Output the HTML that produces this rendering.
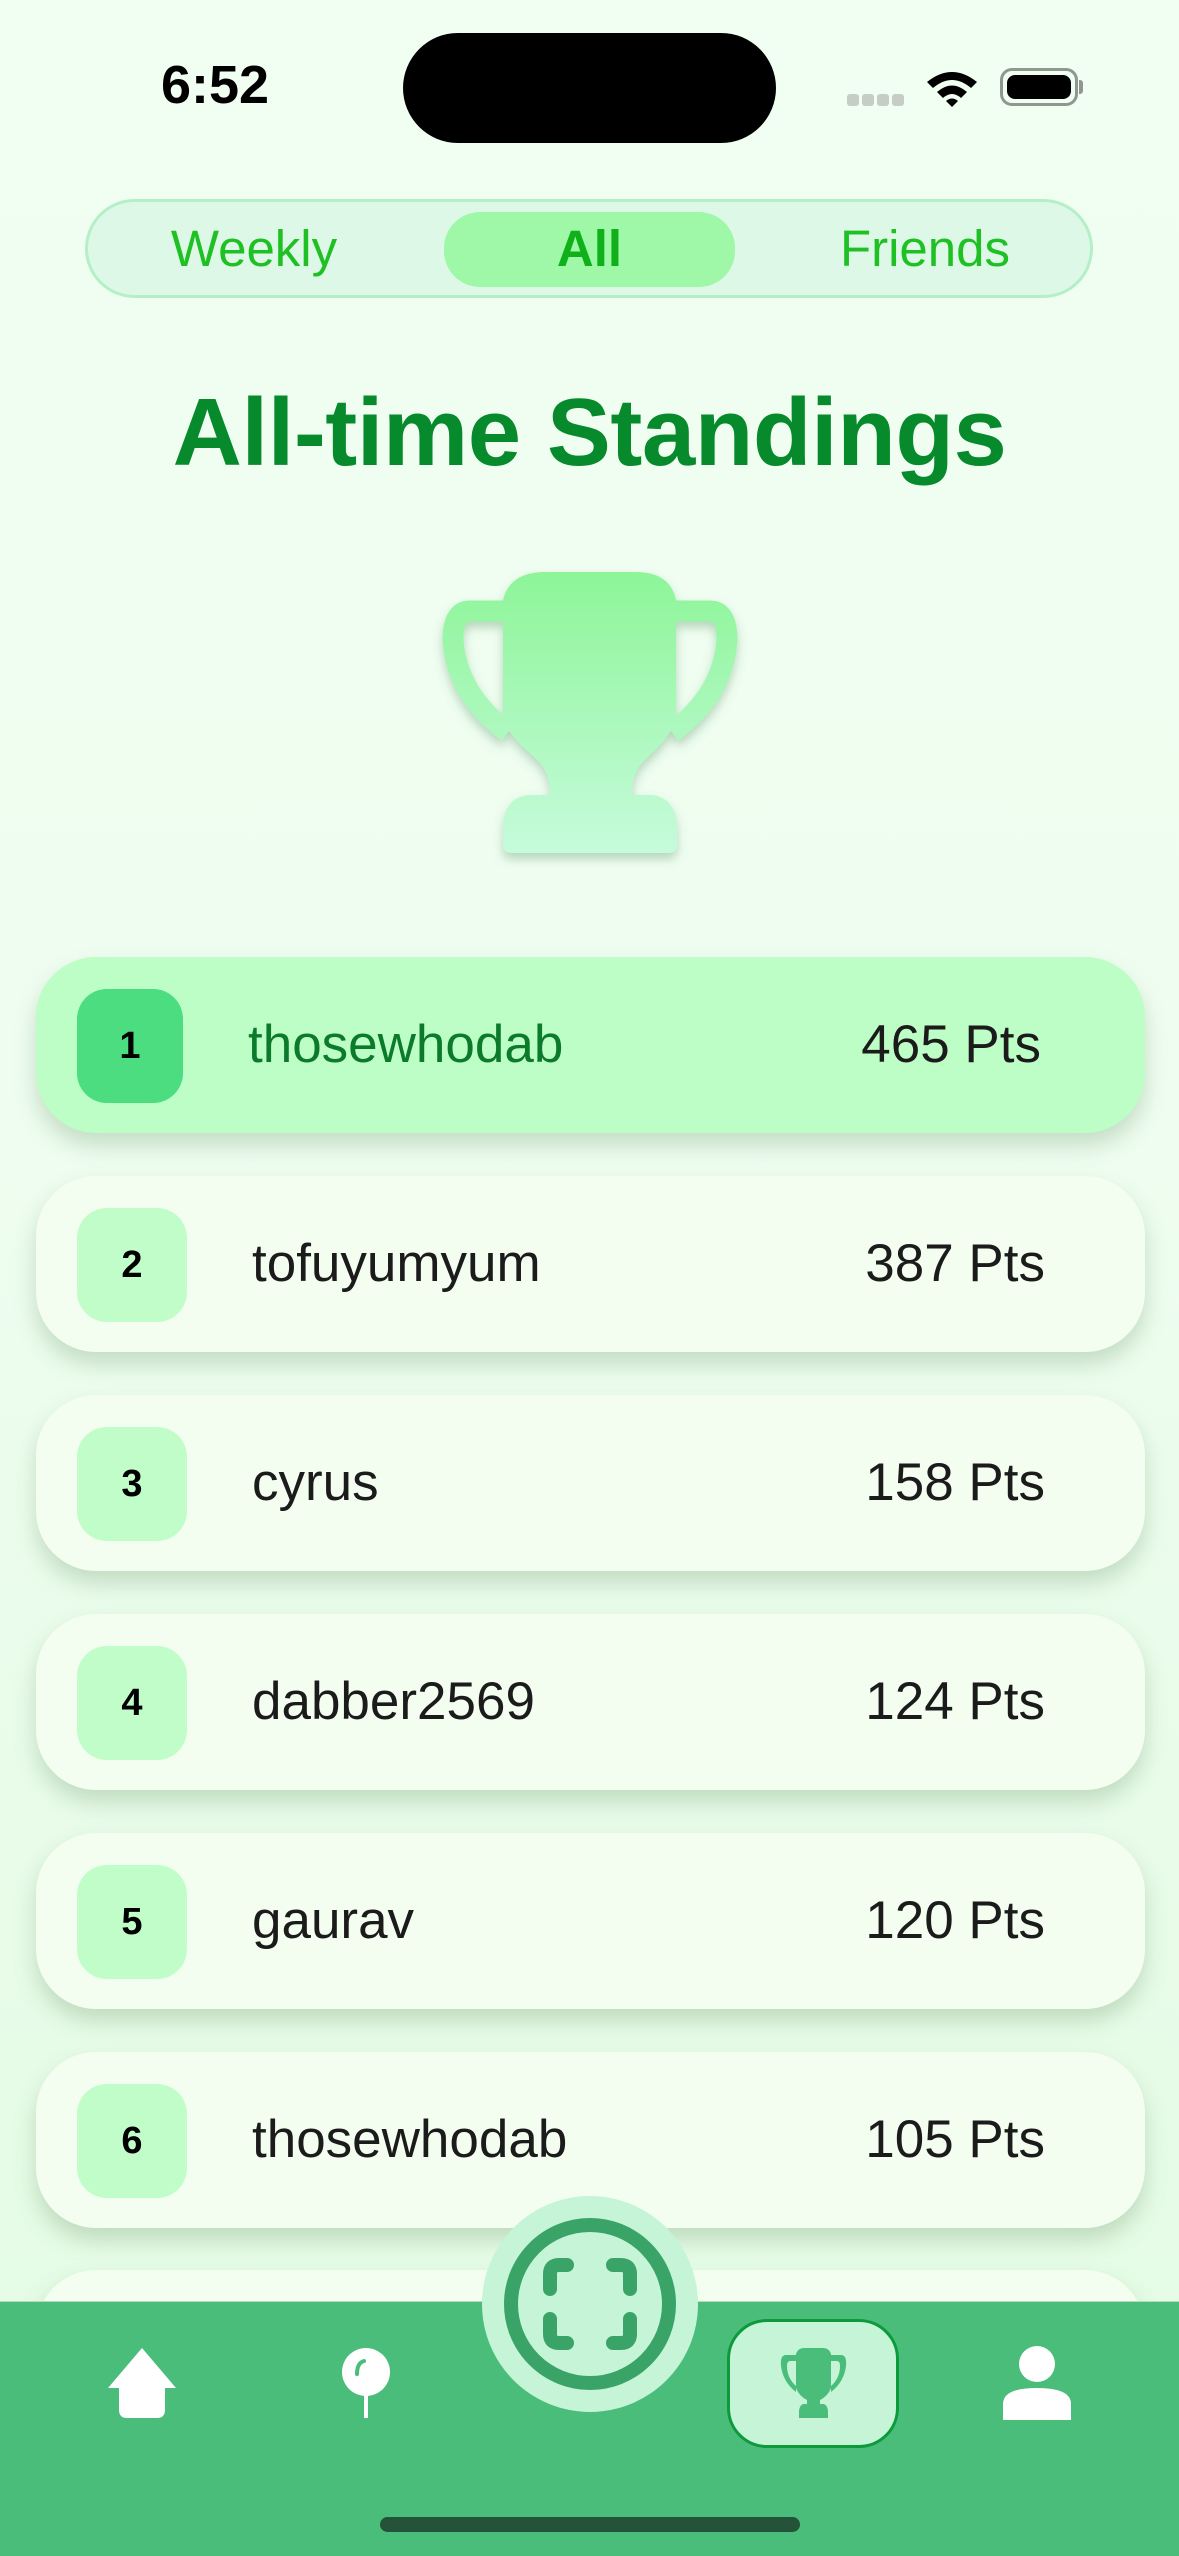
<!DOCTYPE html>
<html><head><meta charset="utf-8"><style>
*{margin:0;padding:0;box-sizing:border-box}
body{width:1179px;height:2556px;overflow:hidden;position:relative;font-family:"Liberation Sans",sans-serif;background:linear-gradient(#f1fff2 0%,#effdf0 40%,#e3fbe3 100%)}
.abs{position:absolute}
.seg{left:85px;top:199px;width:1008px;height:99px;border-radius:50px;background:#def8e7;border:3px solid #b5efc7}
.segt{position:absolute;top:0;height:93px;line-height:93px;font-size:51px;color:#1fc024;text-align:center}
.pill{left:444px;top:212px;width:291px;height:75px;border-radius:36px;background:#9ef8a8}
.title{left:0;width:1179px;top:378px;text-align:center;font-size:96px;font-weight:bold;color:#078a2b;letter-spacing:-0.5px}
.row{left:36px;width:1109px;height:176px;border-radius:60px;background:#f3fef0;box-shadow:0 12px 22px rgba(90,140,90,.28)}
.row.first{background:#bdfdc6}
.badge{position:absolute;left:41px;top:32px;width:110px;height:114px;border-radius:30px;background:#c1fdc9;font-weight:bold;font-size:38px;line-height:114px;text-align:center;color:#000}
.first .badge{background:#4cdd80;width:106px}
.name{position:absolute;left:216px;top:0;line-height:176px;font-size:53px;color:#1b1b1b}
.first .name{color:#0b7a2b;left:212px}
.pts{position:absolute;right:100px;top:0;line-height:176px;font-size:53px;color:#1b1b1b}
.first .pts{right:104px}
</style></head><body>
<div class="abs" style="left:161px;top:54px;font-size:54px;font-weight:bold;color:#000">6:52</div>
<div class="abs" style="left:403px;top:33px;width:373px;height:110px;border-radius:55px;background:#000"></div>
<div class="abs" style="left:847px;top:94px;width:12px;height:12px;border-radius:3px;background:#c5cdc5;box-shadow:15px 0 #c5cdc5,30px 0 #c5cdc5,45px 0 #c5cdc5"></div>
<svg class="abs" style="left:925px;top:68px" width="54" height="40" viewBox="0 0 54 40"><path d="M2,14 Q27,-6 52,14 L46,20 Q27,4 8,20Z" fill="#000"/><path d="M12,24 Q27,11 42,24 L36,30 Q27,22 18,30Z" fill="#000"/><path d="M21,33 Q27,28 33,33 L27,39Z" fill="#000"/></svg>
<div class="abs" style="left:1000px;top:68px;width:78px;height:38px;border-radius:12px;border:3px solid #8f978f;padding:4px"><div style="width:100%;height:100%;background:#000;border-radius:8px"></div></div>
<div class="abs" style="left:1079px;top:80px;width:4px;height:14px;border-radius:0 3px 3px 0;background:#8f978f"></div>

<div class="abs seg"></div>
<div class="abs pill"></div>
<div class="abs segt" style="left:104px;width:300px;top:202px">Weekly</div>
<div class="abs segt" style="left:444px;width:291px;top:202px;font-weight:bold;color:#10b01a">All</div>
<div class="abs segt" style="left:775px;width:300px;top:202px">Friends</div>

<div class="abs title">All-time Standings</div>

<svg class="abs" style="left:420px;top:560px" width="340" height="310" viewBox="420 560 340 310">
<defs><linearGradient id="tg" x1="0" y1="572" x2="0" y2="853" gradientUnits="userSpaceOnUse"><stop offset="0" stop-color="#8df598"/><stop offset="1" stop-color="#c6fbdc"/></linearGradient>
<filter id="sh" x="-20%" y="-20%" width="140%" height="140%"><feDropShadow dx="0" dy="6" stdDeviation="5" flood-color="#4a8a5a" flood-opacity=".35"/></filter></defs>
<g filter="url(#sh)">
<path d="M505,611 L470,611 Q453,611 453,640 Q457,695 508,732" fill="none" stroke="url(#tg)" stroke-width="21" stroke-linejoin="round"/>
<path d="M675,611 L710,611 Q727,611 727,640 Q723,695 672,732" fill="none" stroke="url(#tg)" stroke-width="21" stroke-linejoin="round"/>
<path fill="url(#tg)" d="M503,600 Q510,572 545,572 L636,572 Q670,572 676,600 L676,718 Q672,735 650,755 Q632,770 632,790 L632,795 L652,795 Q677,798 677,830 L677,845 Q677,853 668,853 L512,853 Q503,853 503,845 L503,830 Q503,798 528,795 L550,795 L550,790 Q550,770 532,755 Q508,735 503,718Z"/>
</g></svg>

<div class="abs row first" style="top:957px"><div class="badge">1</div><div class="name">thosewhodab</div><div class="pts">465 Pts</div></div>
<div class="abs row" style="top:1176px"><div class="badge">2</div><div class="name">tofuyumyum</div><div class="pts">387 Pts</div></div>
<div class="abs row" style="top:1395px"><div class="badge">3</div><div class="name">cyrus</div><div class="pts">158 Pts</div></div>
<div class="abs row" style="top:1614px"><div class="badge">4</div><div class="name">dabber2569</div><div class="pts">124 Pts</div></div>
<div class="abs row" style="top:1833px"><div class="badge">5</div><div class="name">gaurav</div><div class="pts">120 Pts</div></div>
<div class="abs row" style="top:2052px"><div class="badge">6</div><div class="name">thosewhodab</div><div class="pts">105 Pts</div></div>
<div class="abs row" style="top:2270px"></div>

<div class="abs" style="left:0;top:2301px;width:1179px;height:255px;background:#4abd7a;border-top:1px solid #b9d8c3"></div>
<div class="abs" style="left:482px;top:2196px;width:216px;height:216px;border-radius:50%;background:#c5f4d6"></div>
<svg class="abs" style="left:482px;top:2196px" width="216" height="216" viewBox="0 0 216 216">
<circle cx="108" cy="108" r="79" fill="none" stroke="#3aa468" stroke-width="14"/>
<g fill="none" stroke="#3aa468" stroke-width="14" stroke-linecap="round">
<path d="M68,93 L68,78 Q68,69 77,69 L85,69"/><path d="M131,69 L139,69 Q148,69 148,78 L148,93"/>
<path d="M68,123 L68,138 Q68,147 77,147 L85,147"/><path d="M148,123 L148,138 Q148,147 139,147 L131,147"/>
</g></svg>
<div class="abs" style="left:727px;top:2319px;width:172px;height:129px;border-radius:40px;background:#c5f4d6;border:3px solid #0c9a3a"></div>
<svg class="abs" style="left:778px;top:2348px" width="71" height="70" viewBox="0 0 71 70">
<g fill="#4abd7a"><path d="M18,6 Q20,0 26,0 L45,0 Q51,0 53,6 L53,40 Q50,48 42,52 L42,56 L46,56 Q50,58 50,64 L50,70 L21,70 L21,64 Q21,58 25,56 L29,56 L29,52 Q21,48 18,40Z"/>
<path d="M18,7 L8,7 Q2,7 3,18 Q5,34 18,44 L18,38 Q9,30 9,18 Q9,13 12,13 L18,13Z"/><path d="M53,7 L63,7 Q69,7 68,18 Q66,34 53,44 L53,38 Q62,30 62,18 Q62,13 59,13 L53,13Z"/></g></svg>
<svg class="abs" style="left:107px;top:2348px" width="70" height="70" viewBox="0 0 70 70"><path d="M35,0 L69,40 L58,40 L58,62 Q58,70 50,70 L20,70 Q12,70 12,62 L12,40 L1,40Z" fill="#fff"/></svg>
<svg class="abs" style="left:342px;top:2348px" width="48" height="70" viewBox="0 0 48 70"><ellipse cx="24" cy="24" rx="24" ry="24" fill="#fff"/><path d="M22,70 L22,46 L26,46 L26,70Z" fill="#fff"/><path d="M15,26 Q15,15 22,13" stroke="#4abd7a" stroke-width="4" fill="none" stroke-linecap="round"/></svg>
<svg class="abs" style="left:1003px;top:2346px" width="68" height="74" viewBox="0 0 68 74"><ellipse cx="34" cy="18" rx="18" ry="18" fill="#fff"/><path d="M0,74 L0,58 Q0,42 34,42 Q68,42 68,58 L68,74Z" fill="#fff"/></svg>
<div class="abs" style="left:380px;top:2517px;width:420px;height:15px;border-radius:8px;background:#24533a"></div>
</body></html>
